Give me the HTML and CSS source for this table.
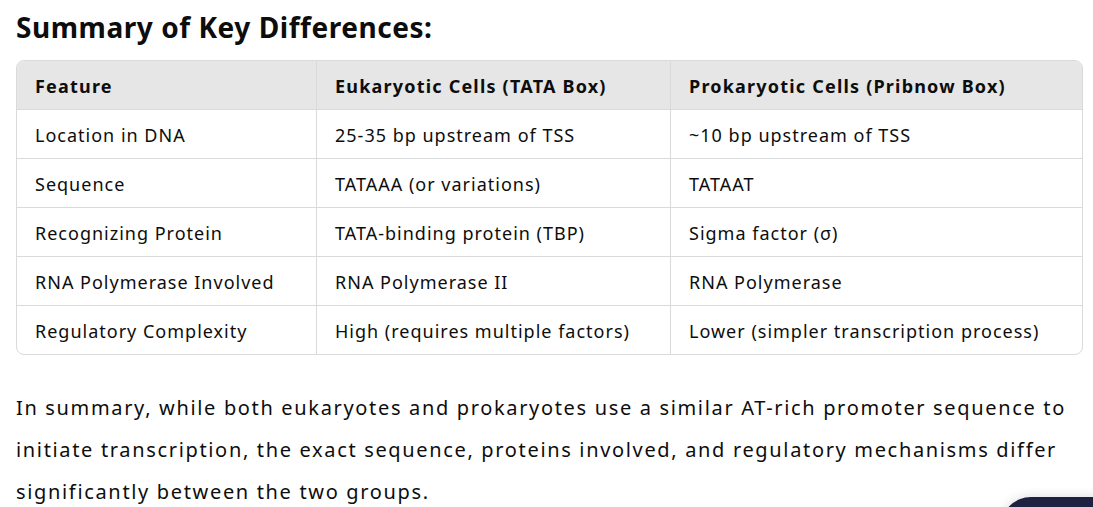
FILE: index.html
```html
<!DOCTYPE html>
<html>
<head>
<meta charset="utf-8">
<link rel="stylesheet" href="styles.css">
</head>
<body>
<div class="page">
  <h3 class="title">Summary of Key Differences:</h3>
  <div class="table-wrap">
    <table class="cmp">
      <thead>
        <tr><th class="c1">Feature</th><th class="c2">Eukaryotic Cells (TATA Box)</th><th class="c3">Prokaryotic Cells (Pribnow Box)</th></tr>
      </thead>
      <tbody>
        <tr><td>Location in DNA</td><td>25-35 bp upstream of TSS</td><td>~10 bp upstream of TSS</td></tr>
        <tr><td>Sequence</td><td>TATAAA (or variations)</td><td>TATAAT</td></tr>
        <tr><td>Recognizing Protein</td><td>TATA-binding protein (TBP)</td><td>Sigma factor (σ)</td></tr>
        <tr><td>RNA Polymerase Involved</td><td>RNA Polymerase II</td><td>RNA Polymerase</td></tr>
        <tr><td>Regulatory Complexity</td><td>High (requires multiple factors)</td><td>Lower (simpler transcription process)</td></tr>
      </tbody>
    </table>
  </div>
  <p class="summary">In summary, while both eukaryotes and prokaryotes use a similar AT-rich promoter sequence to initiate transcription, the exact sequence, proteins involved, and regulatory mechanisms differ significantly between the two groups.</p>
</div>
<div class="fab-clip"><div class="fab"></div></div>
</body>
</html>
```
FILE: styles.css
```css
html, body {
  margin: 0;
  padding: 0;
  background: #fff;
  overflow: hidden;
}
body {
  font-family: "Noto Sans", "Open Sans", sans-serif;
  color: #0d0d0d;
}
.page {
  padding: 0 10px 0 16px;
}
.title {
  margin: 0;
  padding-top: 8px;
  font-size: 28px;
  font-weight: 700;
  letter-spacing: 0.55px;
  line-height: 38px;
  height: 52px;
}
.table-wrap {
  border: 1px solid #dadada;
  border-radius: 8px;
  overflow: hidden;
}
.cmp {
  width: 100%;
  border-collapse: collapse;
  font-size: 18px;
  letter-spacing: 1px;
  table-layout: fixed;
}
.cmp th, .cmp td {
  height: 46px;
  padding: 2px 18px 0 18px;
  text-align: left;
  border-right: 1px solid #dadada;
  border-bottom: 1px solid #dadada;
  white-space: nowrap;
}
.cmp th:last-child, .cmp td:last-child { border-right: none; }
.cmp tbody tr:last-child td { border-bottom: none; }
.cmp th {
  background: #e6e6e6;
  font-weight: 700;
  letter-spacing: 1.2px;
}
.cmp td { font-weight: 400; }
.c1 { width: 263px; }
.c2 { width: 317px; }
.summary {
  margin: 32px 0 0 0;
  font-size: 20px;
  letter-spacing: 1.66px;
  line-height: 42px;
}
.fab-clip {
  position: absolute;
  right: 0;
  bottom: 0;
  width: 100px;
  height: 20px;
  overflow: hidden;
}
.fab {
  position: absolute;
  left: 8px;
  top: 10px;
  width: 160px;
  height: 60px;
  border-radius: 30px;
  background: #1f2140;
  box-shadow: 0 0 12px rgba(0,0,0,0.15);
}
```
